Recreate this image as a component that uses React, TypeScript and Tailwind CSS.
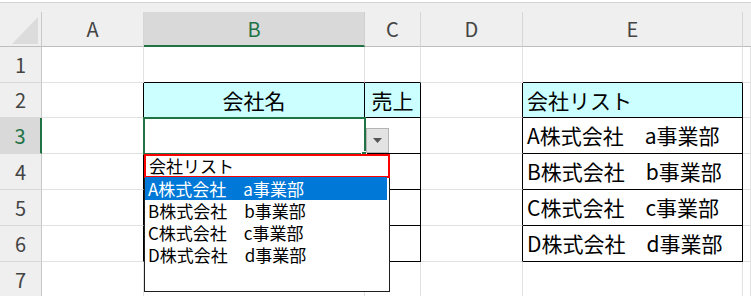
import React from "react";

type CellDef = {
  text?: string;
  cyan?: boolean;
  br?: boolean;
  bb?: boolean;
  center?: boolean;
};

const FS = "\u3000";

const rows: CellDef[][] = [
  [{}, { bb: true }, { bb: true }, {}, { bb: true }, {}],
  [
    { br: true },
    { text: "会社名", cyan: true, br: true, bb: true, center: true },
    { text: "売上", cyan: true, br: true, bb: true, center: true },
    { br: true },
    { text: "会社リスト", cyan: true, br: true, bb: true },
    {},
  ],
  [{ br: true }, { br: true, bb: true }, { br: true, bb: true }, { br: true }, { text: `A株式会社${FS}a事業部`, br: true, bb: true }, {}],
  [{ br: true }, { br: true, bb: true }, { br: true, bb: true }, { br: true }, { text: `B株式会社${FS}b事業部`, br: true, bb: true }, {}],
  [{ br: true }, { br: true, bb: true }, { br: true, bb: true }, { br: true }, { text: `C株式会社${FS}c事業部`, br: true, bb: true }, {}],
  [{ br: true }, { br: true, bb: true }, { br: true, bb: true }, { br: true }, { text: `D株式会社${FS}d事業部`, br: true, bb: true }, {}],
  [{}, {}, {}, {}, {}, {}],
];

function DataCell({ c }: { c: CellDef }) {
  return (
    <div
      className={`flex items-center overflow-hidden whitespace-nowrap border-r border-b text-[21px] leading-none text-black ${
        c.br ? "border-r-black" : "border-r-[#e1e1e1]"
      } ${c.bb ? "border-b-black" : "border-b-[#e1e1e1]"} ${c.cyan ? "bg-[#ccffff]" : "bg-white"} ${
        c.center ? "justify-center" : "justify-start pl-[4px]"
      }`}
    >
      {c.text}
    </div>
  );
}

function RowHeader({ n, active }: { n: number; active?: boolean }) {
  return (
    <div
      className={`flex items-center justify-center border-b border-b-[#d9d9d9] text-[20px] leading-none ${
        active
          ? "bg-[#d9d9d9] text-[#217346] border-r-2 border-r-[#217346]"
          : "bg-[#efefef] text-[#444444] border-r border-r-[#c8c8c8]"
      }`}
    >
      {n}
    </div>
  );
}

function ColHeader({ l, active }: { l: string; active?: boolean }) {
  return (
    <div
      className={`flex items-center justify-center text-[20px] leading-none ${
        active
          ? "bg-[#d9d9d9] text-[#217346] border-b-2 border-b-[#217346] border-r border-r-[#cfcfcf]"
          : "bg-[#efefef] text-[#444444] border-b border-b-[#bdbdbd] border-r border-r-[#d6d6d6]"
      }`}
    >
      {l}
    </div>
  );
}

export default function App() {
  return (
    <div className="relative w-[751px] h-[296px] overflow-hidden bg-white font-['Noto_Sans_CJK_JP',sans-serif]">
      <div className="h-[2px] bg-white" />
      <div className="h-[10px] bg-[#efefef] border-t border-t-[#d2d2d2]" />
      <div className="grid grid-cols-[42px_102px_221px_56px_102px_220px_8px] grid-rows-[35px_36px_35px_36px_36px_36px_36px_36px]">
        <div className="relative bg-[#efefef] border-b border-b-[#bdbdbd] border-r border-r-[#c8c8c8]">
          <svg className="absolute left-[12px] top-[5px]" width="26" height="27" viewBox="0 0 26 27">
            <polygon points="26,0 26,27 0,27" fill="#dcdcdc" />
          </svg>
        </div>
        <ColHeader l="A" />
        <ColHeader l="B" active />
        <ColHeader l="C" />
        <ColHeader l="D" />
        <ColHeader l="E" />
        <div className="bg-[#efefef] border-b border-b-[#bdbdbd]" />
        {rows.map((r, i) => (
          <React.Fragment key={i}>
            <RowHeader n={i + 1} active={i === 2} />
            {r.map((c, j) => (
              <DataCell key={j} c={c} />
            ))}
          </React.Fragment>
        ))}
      </div>

      {/* active cell B3 */}
      <div className="absolute left-[143px] top-[117px] w-[223px] h-[38px] border-2 border-[#217346]" />
      <div className="absolute left-[361px] top-[151px] w-[6px] h-[5px] bg-[#217346] border border-white" />

      {/* dropdown button */}
      <div className="absolute left-[366px] top-[128px] w-[23px] h-[25px] bg-[#e3e3e3] border border-[#b4b4b4] flex items-center justify-center">
        <svg width="9" height="5" viewBox="0 0 9 5">
          <polygon points="0,0 9,0 4.5,5" fill="#555555" />
        </svg>
      </div>

      {/* dropdown list */}
      <div className="absolute left-[144px] top-[154px] w-[246px] h-[138px] bg-white border border-[#1f1f1f] text-[17px] leading-[20px] text-black">
        <div className="-m-px h-[24px] border-2 border-[#ff0000] pl-[3px] flex items-center">
          会社リスト
        </div>
        <div className="mr-[2px] h-[23px] bg-[#0078d7] text-white pl-[3px] flex items-center whitespace-nowrap">
          {`A株式会社${FS}a事業部`}
        </div>
        <div className="h-[22px] pl-[3px] flex items-center whitespace-nowrap">{`B株式会社${FS}b事業部`}</div>
        <div className="h-[22px] pl-[3px] flex items-center whitespace-nowrap">{`C株式会社${FS}c事業部`}</div>
        <div className="h-[22px] pl-[3px] flex items-center whitespace-nowrap">{`D株式会社${FS}d事業部`}</div>
      </div>
    </div>
  );
}
